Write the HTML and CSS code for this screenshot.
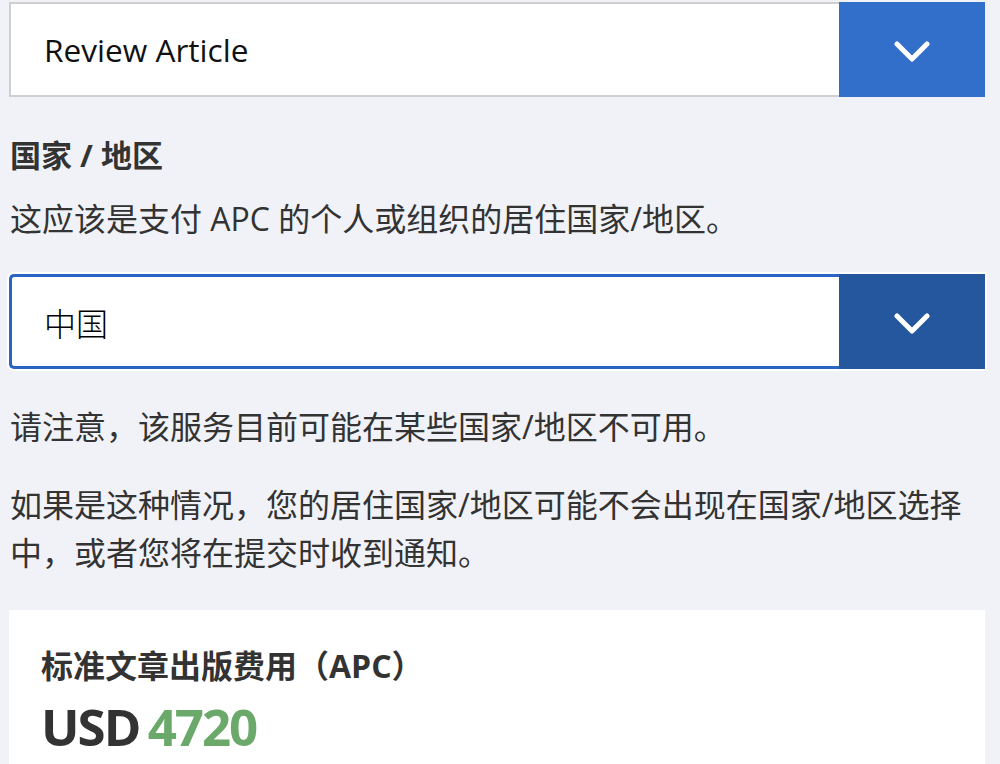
FILE: index.html
```html
<!DOCTYPE html>
<html lang="zh-CN">
<head>
<meta charset="utf-8">
<title>APC</title>
<link rel="stylesheet" href="styles.css">
</head>
<body>
<div class="page">
  <div class="select select-default">
    <div class="select-value">Review Article</div>
    <div class="select-btn">
      <svg class="chev" width="36" height="22" viewBox="0 0 36 22"><polyline points="3,3 18,18 33,3" fill="none" stroke="#fff" stroke-width="5" stroke-linecap="round" stroke-linejoin="round"/></svg>
    </div>
  </div>

  <h3 class="label">国家 / 地区</h3>
  <p class="hint">这应该是支付 APC 的个人或组织的居住国家/地区。</p>

  <div class="select select-focus">
    <div class="select-value cjk">中国</div>
    <div class="select-btn">
      <svg class="chev" width="36" height="22" viewBox="0 0 36 22"><polyline points="3,3 18,18 33,3" fill="none" stroke="#fff" stroke-width="5" stroke-linecap="round" stroke-linejoin="round"/></svg>
    </div>
  </div>

  <p class="note first">请注意，该服务目前可能在某些国家/地区不可用。</p>
  <p class="note">如果是这种情况，您的居住国家/地区可能不会出现在国家/地区选择中，或者您将在提交时收到通知。</p>

  <div class="card">
    <h4 class="card-title">标准文章出版费用（APC）</h4>
    <div class="price"><span class="cur">USD</span> <span class="amt">4720</span></div>
  </div>
</div>
</body>
</html>
```

FILE: styles.css
```css
html, body {
  margin: 0;
  padding: 0;
  background: #f1f2f7;
}
body {
  font-family: "Open Sans", "Noto Sans CJK SC", sans-serif;
  color: #333;
  font-size: 32px;
}
.page {
  padding: 2px 15px 0 9px;
  display: flex;
  flex-direction: column;
}
.select {
  display: flex;
  height: 95px;
  background: #fff;
  box-sizing: border-box;
}
.select-default {
  border: 2px solid #cfcfd3;
  border-right: none;
}
.select-default .select-btn {
  margin: -2px 0;
  background: #326fca;
}
.select-focus {
  margin-top: 33px;
  border: 3px solid #2a64c5;
  border-right: none;
  border-radius: 5px 0 0 5px;
  box-shadow: 0 0 0 2px #fff;
}
.select-focus .select-btn {
  margin: -3px 0;
  background: #24579e;
}
.select-value {
  flex: 1;
  display: flex;
  align-items: center;
  padding-left: 33px;
  color: #111;
  font-size: 31.6px;
}
.select-focus .select-value {
  padding-left: 32px;
  font-family: "Noto Sans CJK SC", sans-serif;
  font-weight: 300;
  font-size: 32px;
  color: #000;
}
.select-btn {
  width: 146px;
  display: flex;
  align-items: center;
  justify-content: center;
  padding-top: 4px;
  box-sizing: border-box;
}
.chev { display: block; }
.label {
  margin: 38px 0 0 1px;
  font-size: 31px;
  font-weight: 700;
  line-height: 40px;
  color: #333;
}
.hint {
  margin: 22px 0 0 1px;
  line-height: 44px;
}
.note {
  margin: 30px 0 0 1px;
  line-height: 48px;
}
.note.first {
  margin-top: 34px;
}
.card {
  margin-top: 33px;
  background: #fff;
  padding: 34px 32px 20px;
}
.card-title {
  margin: 0;
  font-size: 32px;
  font-weight: 700;
  line-height: 44px;
  color: #333;
}
.price {
  margin-top: 8px;
  font-size: 51px;
  font-weight: 700;
  line-height: 60px;
  letter-spacing: -2px;
  word-spacing: -3px;
}
.cur { color: #333; }
.amt { color: #6aa96a; }
```
